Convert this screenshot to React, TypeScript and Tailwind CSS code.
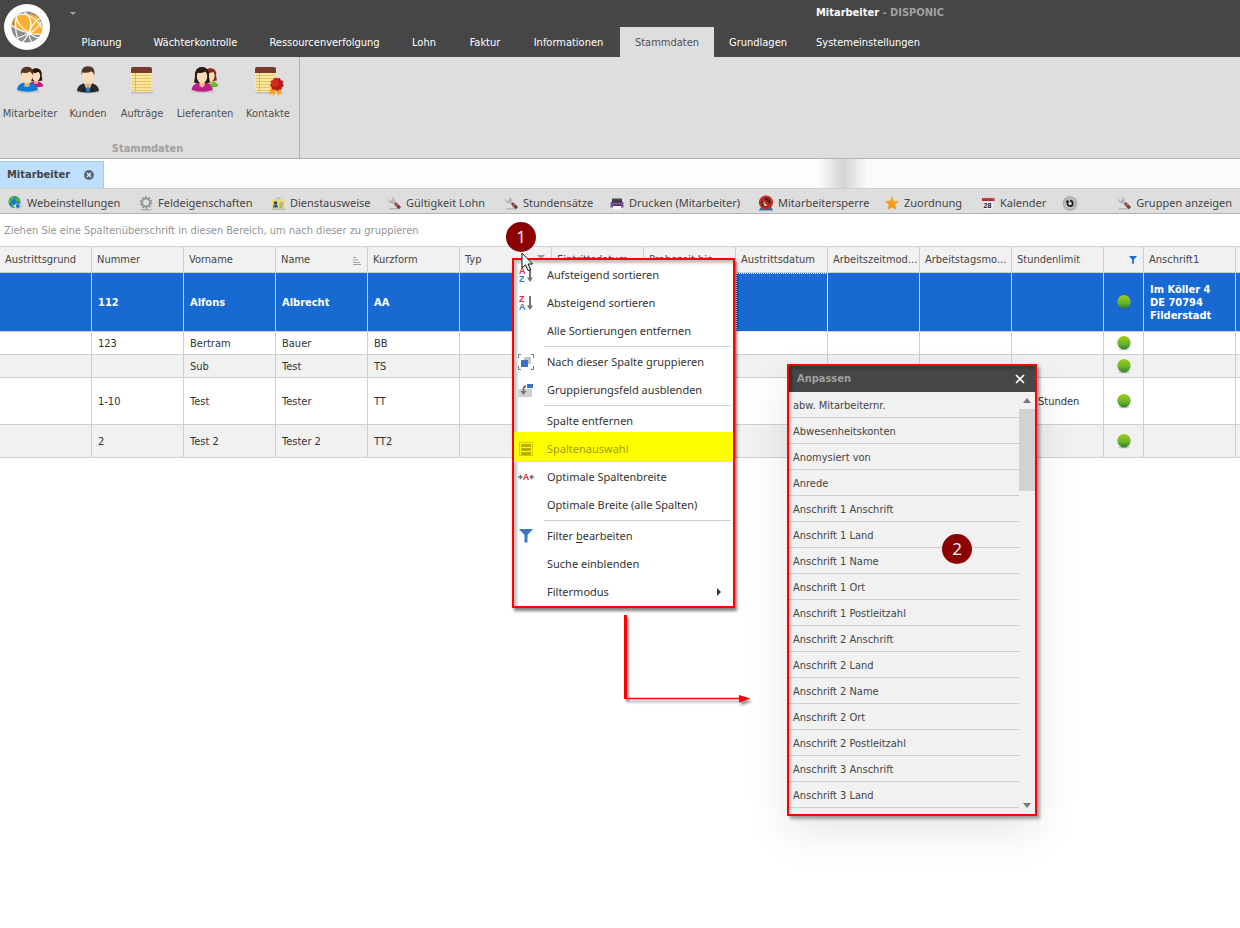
import type { ReactNode } from "react";

/* ---------- Ribbon artwork ---------- */

function Logo() {
  return (
    <svg viewBox="0 0 46 46" className="size-[46px]" aria-hidden="true">
      <defs>
        <clipPath id="globe">
          <circle cx="23" cy="23" r="15.5" />
        </clipPath>
      </defs>
      <circle cx="23" cy="23" r="23" fill="#fff" />
      <g clipPath="url(#globe)">
        <rect x="7" y="7" width="32" height="32" fill="#8b8d90" />
        <path d="M10 22 Q9 14 15 11 Q24 8 33 12 Q40 20 38 31 Q31 31 25 29 Q15 27 10 22Z" fill="#fbb034" />
        <g fill="none" stroke="#fff" strokeWidth="1.2">
          <path d="M7 15 Q16 8 23 11 Q33 14 39 25" />
          <path d="M7 21 Q15 27 25 29 Q32 31 39 30" />
          <path d="M14 7 Q9 20 14 36" />
          <path d="M19 7 Q31 15 25 29 Q22 35 17 40" />
          <path d="M36 14 Q28 19 25 29 Q25 35 29 40" />
          <path d="M12 12 Q13 21 25 29 Q32 27 38 17" />
          <path d="M13 34 Q18 33 25 29 Q31 34 36 34" />
        </g>
      </g>
    </svg>
  );
}

function Head({ x, y, s, hair, long }: { x: number; y: number; s: number; hair: string; long?: boolean }) {
  return (
    <g transform={`translate(${x} ${y}) scale(${s})`}>
      {long && <path d="M-7 1 Q-8 -8 0 -8 Q8 -8 7 1 L8 7 Q0 9 -8 7Z" fill={hair} />}
      <path d="M-2.5 5 h5 v6 h-5z" fill="#e8ad7c" />
      <ellipse cx="0" cy="1" rx="5.2" ry="6.8" fill="#fbdcb8" />
      <path d="M-6 0 Q-7 -8.5 0 -8.5 Q7 -8.5 6 0 Q5 -3 3 -4 Q-1 -1.5 -5 -3 Z" fill={hair} />
    </g>
  );
}

function StaffIcon() {
  return (
    <svg viewBox="0 0 28 28" className="size-7" aria-hidden="true">
      <ellipse cx="13" cy="25.500" rx="12" ry="1.500" fill="#999" opacity=".4" />
      <path d="M12 21 Q13 16 18 15 Q26 15 27.500 20 Q25 22 12 21Z" fill="#c4158a" />
      <Head x={20} y={9} s={0.8} hair="#251510" long />
      <path d="M1 24 Q1 18 8 16.500 L11 19 L14 16.500 Q21 18 22 24 Q12 27.500 1 24Z" fill="#0f7bd0" />
      <path d="M8 16.500 L11 21 L14 16.500Z" fill="#e8ad7c" />
      <Head x={11} y={9.500} s={1.02} hair="#5a3520" />
    </svg>
  );
}

function CustomerIcon() {
  return (
    <svg viewBox="0 0 28 28" className="size-7" aria-hidden="true">
      <ellipse cx="14" cy="26" rx="12" ry="1.500" fill="#999" opacity=".4" />
      <path d="M3 25 Q3 19 11 17 L14 19 L17 17 Q25 19 25 25 Q14 28 3 25Z" fill="#25272b" />
      <path d="M10 17.200 L14 26 L18 17.200 L14 15Z" fill="#fff" />
      <path d="M13 18.500 h2 l1 6 l-2 2 l-2 -2z" fill="#1583d6" />
      <Head x={14} y={9.500} s={1.08} hair="#513424" />
    </svg>
  );
}

function SupplierIcon() {
  return (
    <svg viewBox="0 0 28 28" className="size-7" aria-hidden="true">
      <ellipse cx="13" cy="25.500" rx="12" ry="1.500" fill="#999" opacity=".4" />
      <path d="M12 21 Q13 16 18 15 Q26 15 27.500 20 Q25 22 12 21Z" fill="#62b82d" />
      <Head x={19.500} y={9} s={0.8} hair="#8d2b18" long />
      <path d="M0.500 24 Q1 18 8 16.500 L11 19 L14 16.500 Q21 18 22 24 Q12 27.500 .5 24Z" fill="#be1d8c" />
      <Head x={11} y={9.500} s={1} hair="#2b1a17" long />
      <path d="M8.500 17 L11 22 L14 17Z" fill="#f5c69b" />
    </svg>
  );
}

function Pad() {
  return (
    <>
      <rect x="3" y="25.500" width="22" height="2" rx="1" fill="#999" opacity=".5" />
      <rect x="3" y="4" width="21" height="22" rx="1" fill="#fae69a" />
      <path d="M3 7 V2.500 Q3 1 5 1 H22 Q24 1 24 2.500 V7Z" fill="#7a3b2c" />
      <path d="M4 9.500H23M4 12.500H23M4 15.500H23M4 18.500H23M4 21.500H23M4 24.500H23" stroke="#e2c066" strokeWidth=".9" />
      <path d="M7.500 7V25.500" stroke="#e9a36e" strokeWidth=".8" />
    </>
  );
}

function OrderIcon() {
  return (
    <svg viewBox="0 0 28 28" className="size-7" aria-hidden="true">
      <Pad />
    </svg>
  );
}

function ContactIcon() {
  return (
    <svg viewBox="0 0 32 32" className="size-8" aria-hidden="true">
      <Pad />
      <path d="M19 20 L17 29 L20 27.500 L22 30 L24 22 L26 30 L28 27.500 L30.500 28.500 L27 20Z" fill="#f2a324" />
      <path
        d="M24 11 l2 1.500 2.500-.6 .9 2.300 2.400.8 -.5 2.500 1.200 2.200 -2 1.500 -.5 2.500 -2.500-.1 -2 1.600 -2-1.600 -2.500.1 -.5-2.500 -2-1.500 1.200-2.200 -.5-2.500 2.400-.8 .9-2.300 2.500.6z"
        fill="#b91818"
        transform="translate(-.6 0)"
      />
      <circle cx="23" cy="17.500" r="3.800" fill="#d42a22" />
    </svg>
  );
}

/* ---------- Toolbar artwork ---------- */

function Svg16({ children }: { children: ReactNode }) {
  return (
    <svg viewBox="0 0 16 16" className="size-4 shrink-0" aria-hidden="true">
      {children}
    </svg>
  );
}

const WebIcon = () => (
  <Svg16>
    <circle cx="7.500" cy="7" r="6" fill="#1779c9" />
    <path d="M2 4 Q5 0 8 2 L7 4 L4 6 L4 9 L2 8Z M9 1.500 Q13 3 13 7 L10 7 L8 5Z M5 9 L8 10 L7 13 Q4 12 4 10Z" fill="#4fb03c" />
    <path d="M6.500 11 Q10.500 6 15 11 Q10.500 16 6.500 11Z" fill="#e7f3f8" stroke="#8bbdd6" strokeWidth=".8" />
    <circle cx="10.800" cy="11" r="2" fill="#2276b0" />
  </Svg16>
);

const GearIcon = () => (
  <Svg16>
    <ellipse cx="8" cy="14.800" rx="6" ry=".8" fill="#aaa" />
    <circle cx="8" cy="7.500" r="4" fill="none" stroke="#969696" strokeWidth="2" />
    <circle cx="8" cy="7.500" r="5.400" fill="none" stroke="#969696" strokeWidth="1.600" strokeDasharray="1.900 1.490" />
  </Svg16>
);

const BadgeIcon = () => (
  <Svg16>
    <rect x="2" y="13" width="13" height="2" rx="1" fill="#aaa" opacity=".7" />
    <rect x="6.500" y="2" width="4" height="4" rx="1" fill="#bcc5c8" />
    <rect x="2" y="4.500" width="12.500" height="9" rx="1.300" fill="#f0d878" />
    <path d="M3 12.500 Q3 9.500 5.500 9.500 Q8 9.500 8 12.500Z" fill="#1766b0" />
    <circle cx="5.500" cy="8" r="1.800" fill="#50412d" />
    <path d="M9.500 8h4M9.500 10h4M9.500 12h3" stroke="#6a9a86" />
  </Svg16>
);

const ToolsIcon = () => (
  <Svg16>
    <rect x="3" y="13" width="10" height="1.500" fill="#aaa" opacity=".7" />
    <path d="M1.500 3 L4 6 L6.500 4.500 L5.500 2 Q9 2.500 9 6 L11 8.500 L9 10.500 L6.500 8.500 Q2 8.500 1.500 3Z" fill="#b7b7b7" />
    <path d="M8.500 8.500 L10.500 7.500 L15 12 L13 14.200 L9 10.800Z" fill="#7b3a31" />
    <path d="M9.500 11.500 L12 8.500" stroke="#d8d0cc" strokeWidth=".8" />
  </Svg16>
);

const PrinterIcon = () => (
  <Svg16>
    <rect x="3" y="3.500" width="10" height="4" fill="#4a4650" />
    <path d="M1.500 8 Q1.500 6.500 3 6.500 H13 Q14.500 6.500 14.500 8 V12.500 H1.500Z" fill="#77549b" />
    <rect x="3" y="5.500" width="10" height="2" fill="#38343e" />
    <rect x="4" y="10.500" width="8" height="4" fill="#f7f5f9" />
    <rect x="3.500" y="9.800" width="9" height="1" fill="#2d2536" />
  </Svg16>
);

const BlockIcon = () => (
  <Svg16>
    <path d="M1 15.500 Q2 11 8 11 Q14 11 15 15.500Z" fill="#1b78bb" />
    <circle cx="8" cy="7.500" r="5.900" fill="#3b2926" stroke="#c72a21" strokeWidth="2.400" />
    <path d="M5 6.500 Q8 4.500 11 9.500 Q8 12.500 6 10.500Z" fill="#efc7a0" />
    <path d="M4 3.500 L12 11.500" stroke="#c72a21" strokeWidth="2.600" />
  </Svg16>
);

const StarIcon = () => (
  <Svg16>
    <path d="M8 1.200 L10 6 L15 6.300 L11.200 9.700 L12.500 15 L8 12.200 L3.500 15 L4.800 9.700 L1 6.300 L6 6Z" fill="#f59c12" />
    <path d="M8 2.500 L9.400 6.600 L13.500 7 L8 8.500Z" fill="#fbb030" />
  </Svg16>
);

const CalendarIcon = () => (
  <Svg16>
    <rect x="3.500" y="5" width="9.500" height="9.500" fill="#f0f0f0" />
    <path d="M2 3 H14.500 V6 H2Z" fill="#b9262b" />
    <path d="M4 2v2.500M7 2v2.500M10 2v2.500M13 2v2.500" stroke="#e9aeb0" strokeWidth=".7" />
    <text x="3.600" y="12.800" fontSize="7" fontWeight="700" fontFamily="Liberation Sans, sans-serif" fill="#111">28</text>
  </Svg16>
);

const RefreshIcon = () => (
  <Svg16>
    <defs>
      <radialGradient id="refresh">
        <stop offset="0" stopColor="#e8e8e8" />
        <stop offset="1" stopColor="#a6a6a6" />
      </radialGradient>
    </defs>
    <circle cx="8" cy="8.500" r="7.300" fill="url(#refresh)" />
    <path d="M5.500 6.500 V8.500 A2.600 2.600 0 0 0 10.700 8.500 Q10.700 6 8 5.500" fill="none" stroke="#222" strokeWidth="1.900" />
    <path d="M3.500 7.300 L5.500 4.500 L7.700 7.300Z" fill="#222" />
  </Svg16>
);

/* ---------- Context menu artwork ---------- */

function SortIcon({ top, bottom }: { top: "A" | "Z"; bottom: "A" | "Z" }) {
  return (
    <svg viewBox="0 0 16 16" className="size-4" aria-hidden="true">
      <text x="1" y="7" fontSize="9" fontWeight="700" fontFamily="Liberation Sans, sans-serif" fill="#e0283c">{top}</text>
      <text x="1" y="15" fontSize="9" fontWeight="700" fontFamily="Liberation Sans, sans-serif" fill="#3a75c4">{bottom}</text>
      <path d="M12 1V12" stroke="#737373" strokeWidth="2" />
      <path d="M9 10.500 H15 L12 15Z" fill="#737373" />
    </svg>
  );
}

const GroupIcon = () => (
  <svg viewBox="0 0 16 16" className="size-4" aria-hidden="true">
    <path d="M3 .5H.5V4M13 .5H15.500V4M3 15.500H.5V12M13 15.500H15.500V12" fill="none" stroke="#737373" />
    <rect x="6" y="3" width="7" height="7" fill="#c4c4c4" />
    <rect x="3" y="6" width="7" height="7" fill="#3a75c4" />
  </svg>
);

const GroupPanelIcon = () => (
  <svg viewBox="0 0 16 16" className="size-4" aria-hidden="true">
    <rect x="0" y="7" width="14" height="8" fill="#d0d0d0" />
    <rect x="9" y="2" width="6" height="4" fill="#3a75c4" />
    <path d="M8 4 Q5.500 4.500 5.500 7 V9" fill="none" stroke="#737373" strokeWidth="1.800" />
    <path d="M2.500 9 H8.500 L5.500 13Z" fill="#737373" />
  </svg>
);

const ColumnsIcon = () => (
  <svg viewBox="0 0 16 16" className="size-4" aria-hidden="true">
    <rect x="1.500" y="1.500" width="13" height="13" fill="none" stroke="#d2cb00" />
    <path d="M3 4.500H13M3 8.500H13M3 12.500H13" stroke="#b8ae00" strokeWidth="3" />
  </svg>
);

const FitIcon = () => (
  <svg viewBox="0 0 16 16" className="size-4" aria-hidden="true">
    <text x="4.700" y="11" fontSize="9" fontWeight="700" fontFamily="Liberation Sans, sans-serif" fill="#e0283c">A</text>
    <path d="M0 8H3M13 8H16" stroke="#737373" strokeWidth="1.600" />
    <path d="M1.800 5L4.800 8L1.800 11ZM14.200 5L11.200 8L14.200 11Z" fill="#737373" />
  </svg>
);

const Funnel = ({ className }: { className: string }) => (
  <svg viewBox="0 0 14 14" className={className} aria-hidden="true">
    <path d="M0 0 H14 L8.500 6 V13.500 H5.500 V6Z" fill="currentColor" />
  </svg>
);

/* ---------- Data ---------- */

const ribbonTabs = [
  { label: "Planung", w: "w-[71px]" },
  { label: "Wächterkontrolle", w: "w-[117px]" },
  { label: "Ressourcenverfolgung", w: "w-[141px]" },
  { label: "Lohn", w: "w-[58px]" },
  { label: "Faktur", w: "w-[64px]" },
  { label: "Informationen", w: "w-[103px]" },
  { label: "Stammdaten", w: "w-[94px]", active: true },
  { label: "Grundlagen", w: "w-[88px]" },
  { label: "Systemeinstellungen", w: "w-[132px]" },
];

const ribbonButtons = [
  { label: "Mitarbeiter", icon: <StaffIcon />, w: "w-[60px]" },
  { label: "Kunden", icon: <CustomerIcon />, w: "w-[56px]" },
  { label: "Aufträge", icon: <OrderIcon />, w: "w-[52px]" },
  { label: "Lieferanten", icon: <SupplierIcon />, w: "w-[74px]" },
  { label: "Kontakte", icon: <ContactIcon />, w: "w-[52px]" },
];

const tools = [
  { label: "Webeinstellungen", icon: <WebIcon />, w: "w-[131px]" },
  { label: "Feldeigenschaften", icon: <GearIcon />, w: "w-[132px]" },
  { label: "Dienstausweise", icon: <BadgeIcon />, w: "w-[116px]" },
  { label: "Gültigkeit Lohn", icon: <ToolsIcon />, w: "w-[117px]" },
  { label: "Stundensätze", icon: <ToolsIcon />, w: "w-[106px]" },
  { label: "Drucken (Mitarbeiter)", icon: <PrinterIcon />, w: "w-[149px]" },
  { label: "Mitarbeitersperre", icon: <BlockIcon />, w: "w-[126px]" },
  { label: "Zuordnung", icon: <StarIcon />, w: "w-[96px]" },
  { label: "Kalender", icon: <CalendarIcon />, w: "w-[82px]" },
];

const columns = [
  "Austrittsgrund", "Nummer", "Vorname", "Name", "Kurzform", "Typ", "Eintrittsdatum",
  "Probezeit bis", "Austrittsdatum", "Arbeitszeitmod...", "Arbeitstagsmo...", "Stundenlimit",
];

const rows = [
  { h: "h-[59px]", cells: ["", "112", "Alfons", "Albrecht", "AA"], limit: "", address: ["Im Köller 4", "DE 70794", "Filderstadt"] },
  { h: "h-[23px]", cells: ["", "123", "Bertram", "Bauer", "BB"], limit: "" },
  { h: "h-[23px]", cells: ["", "", "Sub", "Test", "TS"], limit: "" },
  { h: "h-[47px]", cells: ["", "1-10", "Test", "Tester", "TT"], limit: "Stunden" },
  { h: "h-[33px]", cells: ["", "2", "Test 2", "Tester 2", "TT2"], limit: "" },
];

const fields = [
  "abw. Mitarbeiternr.", "Abwesenheitskonten", "Anomysiert von", "Anrede",
  "Anschrift 1 Anschrift", "Anschrift 1 Land", "Anschrift 1 Name", "Anschrift 1 Ort", "Anschrift 1 Postleitzahl",
  "Anschrift 2 Anschrift", "Anschrift 2 Land", "Anschrift 2 Name", "Anschrift 2 Ort", "Anschrift 2 Postleitzahl",
  "Anschrift 3 Anschrift", "Anschrift 3 Land",
];

/* ---------- Sections ---------- */

function Header() {
  return (
    <header className="flex h-[57px] bg-[#464646] text-white">
      <div className="w-[66px] shrink-0 pl-1 pt-1">
        <Logo />
      </div>
      <div className="flex min-w-0 grow flex-col justify-between">
        <div className="flex h-[26px] items-center">
          <button aria-label="Schnellzugriff anpassen" className="ml-1 border-x-[3px] border-t-[3px] border-x-transparent border-t-[#a8a8a8]" />
          <h1 className="grow pl-[740px] font-bold whitespace-nowrap">
            Mitarbeiter <span className="text-[#a0a0a0]">- DISPONIC</span>
          </h1>
        </div>
        <nav className="flex h-[30px]">
          {ribbonTabs.map((t) => (
            <button
              key={t.label}
              className={`${t.w} shrink-0 pt-0.5 text-center whitespace-nowrap ${t.active ? "bg-[#dedede] text-[#505050]" : ""}`}
            >
              {t.label}
            </button>
          ))}
        </nav>
      </div>
    </header>
  );
}

function Ribbon() {
  return (
    <section className="flex h-[102px] border-b border-[#b2b2b2] bg-[#dedede] text-[#505050]">
      <div className="flex w-[300px] flex-col justify-between border-r border-[#b2b2b2] pt-px pb-[3px]">
        <div className="flex">
          {ribbonButtons.map((b) => (
            <button key={b.label} className={`${b.w} flex shrink-0 flex-col items-center whitespace-nowrap`}>
              <span className="flex h-12 items-start pt-2">{b.icon}</span>
              <span className="leading-4">{b.label}</span>
            </button>
          ))}
        </div>
        <h2 className="pr-1 text-center font-bold leading-3 text-[#a0a0a0]">Stammdaten</h2>
      </div>
    </section>
  );
}

function Toolbar() {
  return (
    <div className="flex h-[26px] items-center border-t border-b border-t-[#cfcfcf] border-b-[#b2b2b2] bg-[#dedede] pt-1 pl-[7px] font-['Noto_Sans','Open_Sans',sans-serif] text-[#444]">
      {tools.map((t) => (
        <button key={t.label} className={`${t.w} flex shrink-0 items-center gap-1 whitespace-nowrap`}>
          {t.icon}
          {t.label}
        </button>
      ))}
      <button aria-label="Aktualisieren" className="shrink-0">
        <RefreshIcon />
      </button>
      <button className="ml-auto flex shrink-0 items-center gap-1 pr-2 whitespace-nowrap">
        <ToolsIcon />
        Gruppen anzeigen
      </button>
    </div>
  );
}

const StatusDot = () => (
  <svg viewBox="0 0 16 16" className="mx-auto size-4" role="img" aria-label="aktiv">
    <defs>
      <linearGradient id="dot" x2="0" y2="1">
        <stop offset="0" stopColor="#9ccc1c" />
        <stop offset=".6" stopColor="#68b32c" />
        <stop offset="1" stopColor="#2f7d2f" />
      </linearGradient>
    </defs>
    <ellipse cx="8" cy="14.500" rx="6" ry=".8" fill="#444" opacity=".3" />
    <circle cx="8" cy="7.800" r="6.700" fill="url(#dot)" />
  </svg>
);

function Grid() {
  const cell = "border-r border-b border-[#cfcfcf]";
  return (
    <table className="w-full table-fixed border-separate border-spacing-0 border-t border-[#cfcfcf] text-left">
      <colgroup>
        {columns.map((c) => (
          <col key={c} className="w-[92px]" />
        ))}
        <col className="w-[40px]" />
        <col className="w-[92px]" />
        <col />
      </colgroup>
      <thead>
        <tr className="h-[26px] bg-[#f1f1f1] text-[#444]">
          {columns.map((c) => (
            <th key={c} className={`${cell} pt-0.5 pl-[5px] font-normal`}>
              <div className="flex items-center justify-between">
                <span className="whitespace-nowrap">{c}</span>
                {c === "Name" && (
                  <svg viewBox="0 0 8 8" className="mr-1.5 size-2 shrink-0" aria-hidden="true">
                    <path d="M0 .5H3M0 3H5M0 5.500H7M0 7.500H8" stroke="#999" strokeWidth=".9" />
                  </svg>
                )}
                {c === "Typ" && <Funnel className="mr-1.5 mb-1 size-2 text-[#999]" />}
              </div>
            </th>
          ))}
          <th className={`${cell} pr-1.5`}>
            <Funnel className="ml-auto size-2 text-[#186ad2]" />
          </th>
          <th className={`${cell} pt-0.5 pl-[5px] font-normal`}>Anschrift1</th>
          <th className="border-b border-[#cfcfcf]" />
        </tr>
      </thead>
      <tbody>
        {rows.map((r, i) => {
          const tone = i === 0 ? "bg-[#186ad2] font-bold text-white" : i % 2 === 0 ? "bg-[#f1f1f1] text-[#333]" : "bg-white text-[#333]";
          return (
            <tr key={i} className={`${r.h} ${tone}`}>
              {r.cells.map((v, j) => (
                <td key={j} className={`${cell} px-1.5 pt-0.5`}>{v}</td>
              ))}
              <td className={cell} />
              <td className={cell} />
              <td className={cell} />
              <td className={`${cell} ${i === 0 ? "outline-1 -outline-offset-1 outline-dotted outline-white" : ""}`} />
              <td className={cell} />
              <td className={cell} />
              <td className={`${cell} pt-0.5 pl-[26px]`}>{r.limit}</td>
              <td className={cell}>
                <StatusDot />
              </td>
              <td className={`${cell} px-1.5 leading-[13px]`}>
                {r.address?.map((l) => (
                  <div key={l} className="whitespace-nowrap">{l}</div>
                ))}
              </td>
              <td className="border-b border-[#cfcfcf]" />
            </tr>
          );
        })}
      </tbody>
    </table>
  );
}

function Item({ icon, children }: { icon?: ReactNode; children: ReactNode }) {
  return (
    <button role="menuitem" className="flex h-7 w-full items-center text-left">
      <span className="ml-1 w-[29px] shrink-0">{icon}</span>
      <span className="grow">{children}</span>
    </button>
  );
}

const Separator = () => (
  <div role="separator" className="mr-0.5 ml-[30px] py-px">
    <div className="h-px bg-[#cfcfcf]" />
  </div>
);

function ContextMenu() {
  return (
    <div
      role="menu"
      className="absolute top-[258px] left-[512px] w-[223px] border-2 border-[#fe0000] bg-white pt-px font-['Noto_Sans','Open_Sans',sans-serif] text-[#333] shadow-[2px_3px_3px_rgba(0,0,0,0.5),inset_3px_3px_3px_rgba(0,0,0,0.25)]"
    >
      <Item icon={<SortIcon top="A" bottom="Z" />}>Aufsteigend sortieren</Item>
      <Item icon={<SortIcon top="Z" bottom="A" />}>Absteigend sortieren</Item>
      <Item>Alle Sortierungen entfernen</Item>
      <Separator />
      <Item icon={<GroupIcon />}>Nach dieser Spalte gruppieren</Item>
      <Item icon={<GroupPanelIcon />}>Gruppierungsfeld ausblenden</Item>
      <Separator />
      <Item>Spalte entfernen</Item>
      <div className="relative text-[#a09c00]">
        <div className="absolute inset-x-0 -top-[3px] h-[30px] bg-[#ffff00]" />
        <div className="relative">
          <Item icon={<ColumnsIcon />}>Spaltenauswahl</Item>
        </div>
      </div>
      <Item icon={<FitIcon />}>Optimale Spaltenbreite</Item>
      <Item>Optimale Breite (alle Spalten)</Item>
      <Separator />
      <Item icon={<Funnel className="ml-px size-[14px] text-[#3a75c4]" />}>
        Filter <u className="underline-offset-2">b</u>earbeiten
      </Item>
      <Item>Suche einblenden</Item>
      <Item>
        <span className="flex items-center justify-between pr-3">
          Filtermodus
          <span className="border-y-4 border-l-4 border-y-transparent border-l-[#333]" />
        </span>
      </Item>
    </div>
  );
}

function FieldChooser() {
  return (
    <section
      aria-label="Anpassen"
      className="absolute top-[364px] left-[787px] w-[250px] border-2 border-[#fe0000] bg-[#f1f1f1] text-[#444] shadow-[3px_3px_3px_rgba(0,0,0,0.35),0_16px_40px_rgba(0,0,0,0.1)]"
    >
      <div className="flex h-[26px] items-center justify-between bg-[#464646] px-2 shadow-[inset_3px_3px_3px_rgba(0,0,0,0.2)]">
        <h2 className="font-bold text-[#a0a0a0]">Anpassen</h2>
        <button aria-label="Schließen" className="mr-0.5">
          <svg viewBox="0 0 10 10" className="size-[10px]" aria-hidden="true">
            <path d="M1 1L9 9M9 1L1 9" stroke="#fff" strokeWidth="1.700" />
          </svg>
        </button>
      </div>
      <div className="flex pb-[6px]">
        <ul className="grow">
          {fields.map((f) => (
            <li key={f} className="flex h-[26px] items-center border-b border-[#cfcfcf] pt-[3px] pl-1">{f}</li>
          ))}
        </ul>
        <div className="flex w-4 shrink-0 flex-col items-center pt-1.5">
          <span className="border-x-4 border-b-[5px] border-x-transparent border-b-[#777]" />
          <span className="mt-1.5 h-[82px] w-4 bg-[#d2d2d2]" />
          <span className="mt-auto border-x-4 border-t-[5px] border-x-transparent border-t-[#777]" />
        </div>
      </div>
      <div className="pointer-events-none absolute inset-y-0 left-0 w-1 bg-linear-to-r from-black/20 to-transparent" />
    </section>
  );
}

const marker =
  "absolute flex size-[30px] items-center justify-center rounded-full bg-[#8b0000] font-['Open_Sans','Noto_Sans',sans-serif] text-[17px] text-white";

export default function App() {
  return (
    <div className="relative min-h-screen overflow-hidden bg-white font-['DejaVu_Sans_Condensed','DejaVu_Sans','Noto_Sans',sans-serif] text-[11px]">
      <Header />
      <Ribbon />
      <div className="flex h-[29px] items-end bg-linear-to-r from-[#fdfdfd] from-66% via-[#d4d4d4] via-68% to-[#fbfbfb] to-70%">
        <div className="flex h-[27px] w-[104px] items-center justify-between border-t border-r border-[#a9c9e8] bg-[#bfdfff] pr-2 pl-[7px] text-[#444]">
          <span className="font-bold">Mitarbeiter</span>
          <button aria-label="Tab schließen">
            <svg viewBox="0 0 12 12" className="size-3" aria-hidden="true">
              <circle cx="6" cy="6" r="5" fill="#5b6672" />
              <path d="M4 4L8 8M8 4L4 8" stroke="#d5eaff" strokeWidth="1.500" />
            </svg>
          </button>
        </div>
      </div>
      <Toolbar />
      <p className="flex h-8 items-center pt-[3px] pl-1 text-[#949494]">
        Ziehen Sie eine Spaltenüberschrift in diesen Bereich, um nach dieser zu gruppieren
      </p>
      <Grid />
      <ContextMenu />
      <FieldChooser />
      <svg viewBox="0 0 132 96" className="absolute top-[612px] left-[622px] h-24 w-[132px] drop-shadow-[2px_3px_1px_rgba(0,0,0,0.4)]" aria-hidden="true">
        <path d="M3.500 3V87" stroke="#fe0000" strokeWidth="3" />
        <path d="M3 86.500H118" stroke="#fe0000" strokeWidth="1.500" />
        <path d="M117 83L128.500 86.500L117 90.500Z" fill="#fe0000" />
      </svg>
      <span className={`${marker} top-[222px] left-[506px]`}>1</span>
      <span className={`${marker} top-[534px] left-[942px]`}>2</span>
      <svg viewBox="0 0 12 20" className="absolute top-[252px] left-[521px] h-5 w-3" aria-hidden="true">
        <path d="M1 1V16L4.500 12.800L7 18.500L9.500 17.500L7 12H11.500Z" fill="#fff" stroke="#111" />
      </svg>
    </div>
  );
}
